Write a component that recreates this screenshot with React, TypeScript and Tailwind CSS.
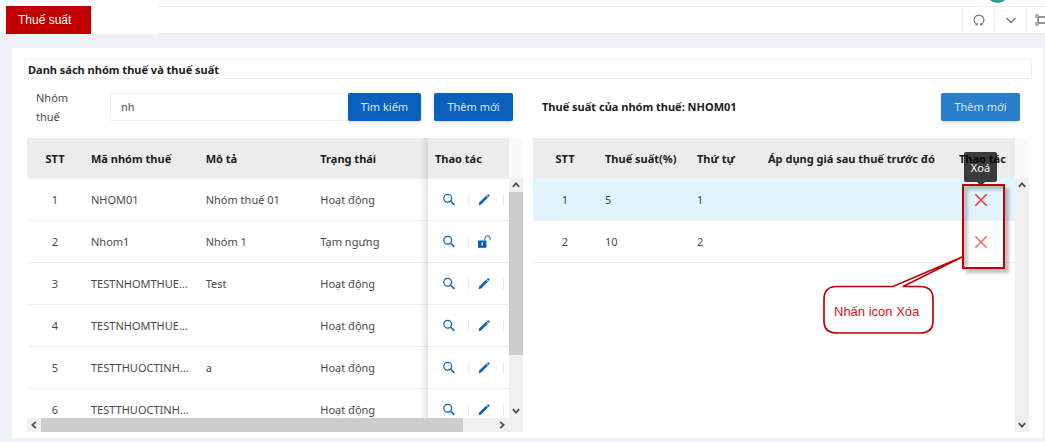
import type { ReactNode } from "react";

type Group = { code: string; name: string; active: boolean };

const groups: Group[] = [
  { code: "NHOM01", name: "Nhóm thuế 01", active: true },
  { code: "Nhom1", name: "Nhóm 1", active: false },
  { code: "TESTNHOMTHUE...", name: "Test", active: true },
  { code: "TESTNHOMTHUE...", name: "", active: true },
  { code: "TESTTHUOCTINH...", name: "a", active: true },
  { code: "TESTTHUOCTINH...", name: "", active: true },
];

const rates = [
  { rate: 5, order: 1 },
  { rate: 10, order: 2 },
];

function SearchIcon() {
  return (
    <svg viewBox="0 0 14 14" className="size-[14px]" fill="none" stroke="currentColor" strokeWidth="1.2">
      <circle cx="5.7" cy="5.2" r="3.9" />
      <path d="M8.5 8 12.4 11.9" strokeWidth="1.5" />
    </svg>
  );
}

function PencilIcon() {
  return (
    <svg viewBox="0 0 14 14" className="size-[14px]" fill="currentColor">
      <path d="M1.6 12.2 2.2 9.6 9.2 2.7 11 4.5 4.1 11.5Z" />
      <path d="M9.7 2.2 10.6 1.4Q11.2 .9 11.8 1.4L12.4 2Q12.9 2.6 12.4 3.2L11.5 4Z" />
    </svg>
  );
}

function UnlockIcon() {
  return (
    <svg viewBox="0 0 14 14" className="size-[14px] overflow-visible">
      <rect x="1" y="5.5" width="8.4" height="7.3" fill="currentColor" />
      <path d="M7.9 5.5V3.4a2.6 2.6 0 0 1 5.2 0V5.4" fill="none" stroke="currentColor" strokeWidth="1" />
      <path d="M5.2 7.6V10.6" stroke="white" strokeWidth="1.3" />
    </svg>
  );
}

function CrossIcon() {
  return (
    <svg viewBox="0 0 14 14" className="size-[14px]" fill="none" stroke="currentColor" strokeWidth="1.6">
      <path d="M1.3 1.3 12.7 12.7M12.7 1.3 1.3 12.7" />
    </svg>
  );
}

function Arrow({ className }: { className: string }) {
  return (
    <svg viewBox="0 0 8 8" className={`size-2 ${className}`} fill="none" stroke="#505050" strokeWidth="1.8">
      <path d="M.8 5.8 4 2.4 7.2 5.8" />
    </svg>
  );
}

function VerticalBar({ thumb }: { thumb?: boolean }) {
  return (
    <div className="flex w-[14px] shrink-0 flex-col">
      <div className="h-10 bg-[#fafafa]" />
      <div className="flex min-h-0 flex-1 flex-col items-center bg-[#f0f0f0]">
        <div className="flex h-[14px] shrink-0 items-center">
          <Arrow className="" />
        </div>
        <div className="min-h-0 w-full flex-1">{thumb && <div className="h-[77%] bg-[#cdcdcd]" />}</div>
        <div className="flex h-[14px] shrink-0 items-center">
          <Arrow className="rotate-180" />
        </div>
      </div>
    </div>
  );
}

function Th({ children, center }: { children: ReactNode; center?: boolean }) {
  return (
    <th
      className={`h-[41px] border-b border-[#f0f0f0] bg-[#ececec] px-2 font-bold whitespace-nowrap text-[#1c1c1c] ${center ? "text-center" : "text-left"}`}
    >
      {children}
    </th>
  );
}

function Td({ children, center }: { children?: ReactNode; center?: boolean }) {
  return (
    <td className={`h-[42px] border-b border-[#f0f0f0] px-2 whitespace-nowrap ${center ? "text-center" : "text-left"}`}>
      {children}
    </td>
  );
}

const primary = "h-7 shrink-0 rounded-xs text-[11px] text-[#dbe9f8] shadow-[0_2px_3px_rgba(0,0,0,0.12)]";

function GroupTable() {
  return (
    <div className="flex min-w-0">
      <div className="flex min-w-0 flex-1 flex-col">
        <div className="relative min-h-0 flex-1 overflow-hidden">
          <table className="w-full table-fixed border-separate border-spacing-0">
            <colgroup>
              <col className="w-14" />
              <col />
              <col />
              <col />
              <col className="w-[82px]" />
            </colgroup>
            <thead>
              <tr>
                <Th center>STT</Th>
                <Th>Mã nhóm thuế</Th>
                <Th>Mô tả</Th>
                <Th>Trạng thái</Th>
                <Th>Thao tác</Th>
              </tr>
            </thead>
            <tbody>
              {groups.map((g, i) => (
                <tr key={i}>
                  <Td center>{i + 1}</Td>
                  <Td>{g.code}</Td>
                  <Td>{g.name}</Td>
                  <Td>{g.active ? "Hoạt động" : "Tạm ngưng"}</Td>
                  <Td>
                    <div className="flex pl-[7px] text-[#0960bd]">
                      <button aria-label="Xem" className="flex h-3 shrink-0 items-center border-r border-[#ececec] pr-3">
                        <SearchIcon />
                      </button>
                      {g.active ? (
                        <button
                          aria-label="Sửa"
                          className="flex h-3 shrink-0 items-center border-r border-[#ececec] pr-3 pl-2"
                        >
                          <PencilIcon />
                        </button>
                      ) : (
                        <button aria-label="Mở khóa" className="flex h-3 shrink-0 items-center pr-3 pl-2">
                          <UnlockIcon />
                        </button>
                      )}
                    </div>
                  </Td>
                </tr>
              ))}
            </tbody>
          </table>
          <div className="absolute inset-y-0 right-[81px] w-2 bg-linear-to-r from-transparent to-black/10" />
        </div>
        <div className="flex h-[14px] shrink-0 items-center bg-[#f0f0f0]">
          <div className="flex w-[14px] justify-center">
            <Arrow className="-rotate-90" />
          </div>
          <div className="h-full flex-1">
            <div className="h-full w-[93%] bg-[#cdcdcd]" />
          </div>
          <div className="flex w-[14px] justify-center">
            <Arrow className="rotate-90" />
          </div>
        </div>
      </div>
      <div className="flex flex-col">
        <div className="flex min-h-0 flex-1">
          <VerticalBar thumb />
        </div>
        <div className="h-[14px] bg-[#f0f0f0]" />
      </div>
    </div>
  );
}

function Callout() {
  return (
    <>
      <div
        role="tooltip"
        className="absolute top-[14px] right-8 flex h-[30px] w-[33px] items-center justify-center rounded-xs bg-black/75 text-[11px] text-white"
      >
        Xoá
        <span className="absolute top-full border-x-4 border-t-4 border-x-transparent border-t-black/75" />
      </div>
      <div className="pointer-events-none absolute top-[46px] right-6 h-[85px] w-[43px] border-2 border-[#c00000] shadow-[4px_4px_3px_rgba(0,0,0,0.25),inset_4px_4px_3px_rgba(0,0,0,0.2)]" />
      <div className="pointer-events-none absolute top-[117px] right-[66px] h-20 w-[142px] text-[#d2141e]">
        <svg viewBox="0 0 142 80" className="size-full" fill="white" stroke="#c00000" strokeWidth="1.7">
          <path d="M72 31.5H16Q3 31.5 3 44V66Q3 78 16 78H99Q112 78 112 66V44Q112 31.5 99 31.5H82L141 2Z" />
        </svg>
        <span className="absolute bottom-0 left-[3px] flex h-12 items-center pl-[10px] font-['Liberation_Sans',sans-serif] text-[13px] whitespace-nowrap">
          Nhấn icon Xóa
        </span>
      </div>
    </>
  );
}

function RateTable() {
  return (
    <div className="relative flex min-w-0">
      <div className="min-w-0 flex-1 overflow-hidden">
        <table className="w-full table-fixed border-separate border-spacing-0">
          <colgroup>
            <col className="w-16" />
            <col className="w-[92px]" />
            <col className="w-[71px]" />
            <col />
            <col className="w-16" />
          </colgroup>
          <thead>
            <tr>
              <Th center>STT</Th>
              <Th>Thuế suất(%)</Th>
              <Th>Thứ tự</Th>
              <Th>Áp dụng giá sau thuế trước đó</Th>
              <Th>Thao tác</Th>
            </tr>
          </thead>
          <tbody>
            {rates.map((r, i) => (
              <tr key={r.order} className={i === 0 ? "bg-[#e1f3fc]" : ""}>
                <Td center>{i + 1}</Td>
                <Td>{r.rate}</Td>
                <Td>{r.order}</Td>
                <Td />
                <Td>
                  <button
                    aria-label="Xoá"
                    className={`block pl-[15px] ${i === 0 ? "text-[#ed3636]" : "text-[#f26c6c]"}`}
                  >
                    <CrossIcon />
                  </button>
                </Td>
              </tr>
            ))}
          </tbody>
        </table>
      </div>
      <VerticalBar />
      <Callout />
    </div>
  );
}

function TopBar() {
  return (
    <header className="flex h-[34px] shrink-0 overflow-hidden bg-white pt-[6px]">
      <h1 className="ml-[6px] flex h-7 w-[85px] items-center bg-[#c00000] pl-3 font-['Liberation_Sans',sans-serif] text-xs text-white">
        Thuế suất
      </h1>
      <div className="w-[67px]" />
      <div className="-mr-[13px] flex flex-1 justify-end border-y border-[#f0f0f2] text-[#7a7a7a]">
        <button aria-label="Tải lại" className="flex w-8 items-center justify-center border-l border-[#ececee]">
          <svg viewBox="0 0 12 12" className="size-3" fill="none" stroke="currentColor" strokeWidth="1.2">
            <path d="M4 10.4A4.9 4.9 0 1 1 8 10.4M2.4 10.7H4.3V9.2M9.6 10.7H7.7V9.2" />
          </svg>
        </button>
        <button aria-label="Mở rộng" className="flex w-8 items-center justify-center border-l border-[#ececee]">
          <svg viewBox="0 0 12 12" className="size-3" fill="none" stroke="currentColor" strokeWidth="1.5">
            <path d="M1.5 4 6 8.5 10.5 4" />
          </svg>
        </button>
        <button aria-label="Toàn màn hình" className="flex w-8 items-center border-l border-[#ececee] pl-2">
          <svg viewBox="0 0 14 12" className="h-3 w-[14px]" fill="none" stroke="currentColor" strokeWidth="1.2">
            <path d="M4 1H1V4M1 8V11H4M10 1H13V4M13 8V11H10" />
            <rect x="3.2" y="3" width="8" height="6" strokeWidth="1.6" />
          </svg>
        </button>
      </div>
      <div className="absolute -top-5 right-9 size-[23px] rounded-full bg-[#2a9d8f]" />
    </header>
  );
}

export default function App() {
  return (
    <div className="relative flex h-screen min-h-[400px] flex-col overflow-hidden bg-[#f0f1f6] font-['Noto_Sans',sans-serif] text-[11px] leading-[19px] text-[#4a4a4a]">
      <TopBar />
      <main className="mt-[14px] mr-[2px] mb-1 ml-3 flex min-h-0 flex-1 flex-col bg-white pt-[11px] pr-[11px] pb-[6px] pl-3">
        <h2 className="flex h-5 shrink-0 items-center border border-[#f0f0f0] pl-[3px] font-bold text-[#1c1c1c]">
          Danh sách nhóm thuế và thuế suất
        </h2>
        <div className="grid h-[59px] shrink-0 grid-cols-2 gap-[10px] px-[3px]">
          <form className="flex items-center pr-[10px] pb-1 pl-[9px]" onSubmit={(e) => e.preventDefault()}>
            <label htmlFor="group" className="w-[74px] shrink-0 pr-8">
              Nhóm thuế
            </label>
            <input
              id="group"
              defaultValue="nh"
              className="h-7 min-w-0 flex-1 rounded-l-xs border border-r-0 border-[#f0f0f0] px-[10px] outline-none"
            />
            <button className={`${primary} w-[73px] bg-[#0960bd]`}>Tìm kiếm</button>
            <button type="button" className={`${primary} ml-[13px] w-[79px] bg-[#0960bd]`}>
              Thêm mới
            </button>
          </form>
          <div className="flex items-center justify-between pr-[9px] pb-1 pl-[9px]">
            <h3 className="font-bold text-[#1c1c1c]">Thuế suất của nhóm thuế: NHOM01</h3>
            <button className={`${primary} w-[79px] bg-[#2a7dc9]`}>Thêm mới</button>
          </div>
        </div>
        <div className="grid min-h-0 flex-1 grid-cols-2 grid-rows-[minmax(0,1fr)] gap-[10px] px-[3px]">
          <GroupTable />
          <RateTable />
        </div>
      </main>
    </div>
  );
}
